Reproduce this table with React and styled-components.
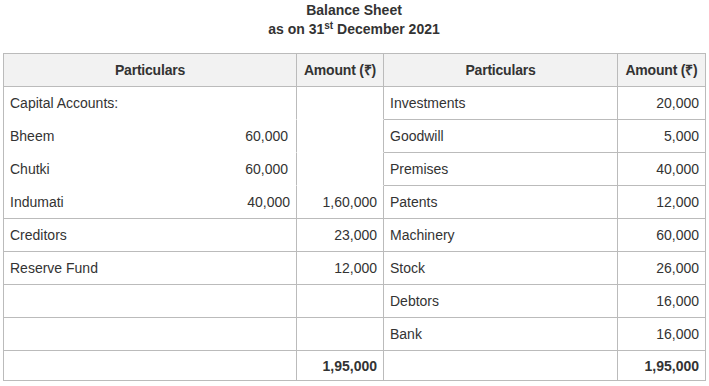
import styled, { createGlobalStyle } from 'styled-components';

const GlobalStyle = createGlobalStyle`
  body {
    margin: 0;
    background: #fff;
    font-family: "Liberation Sans", Arial, sans-serif;
    color: #333;
  }
`;

const Page = styled.div`
  padding: 1px 4px 0 3px;
`;

const Title = styled.div`
  text-align: center;
  font-weight: bold;
  font-size: 14px;
  line-height: 19px;
  margin-bottom: 14px;
`;

const Sup = styled.sup`
  font-size: 10px;
  line-height: 0;
  vertical-align: 5px;
`;

const Table = styled.table`
  width: 702px;
  border-collapse: separate;
  border-spacing: 0;
  border-top: 1px solid #bbb;
  border-left: 1px solid #bbb;
  font-size: 14px;
  table-layout: fixed;
`;

const Head = styled.th`
  background: #f2f2f2;
  font-weight: bold;
  text-align: center;
  padding: 6px 2px;
  line-height: 20px;
  white-space: nowrap;
  letter-spacing: -0.2px;
  border-right: 1px solid #bbb;
  border-bottom: 1px solid #bbb;
`;

const Cell = styled.td`
  padding: ${(p) => (p.$tight ? '5px 6px 4px' : '6px')};
  line-height: 20px;
  text-align: ${(p) => (p.$num ? 'right' : 'left')};
  font-weight: ${(p) => (p.$bold ? 'bold' : 'normal')};
  border-right: 1px solid #bbb;
  border-bottom: ${(p) => (p.$open ? '1px solid transparent' : '1px solid #bbb')};
  white-space: nowrap;
`;

const Split = styled.div`
  display: flex;
  justify-content: space-between;
  padding-right: ${(p) => p.$pad || 0}px;
`;

const capital = [
  { name: 'Capital Accounts:', amt: '', total: '', pad: 0 },
  { name: 'Bheem', amt: '60,000', total: '', pad: 2 },
  { name: 'Chutki', amt: '60,000', total: '', pad: 2 },
  { name: 'Indumati', amt: '40,000', total: '1,60,000', pad: 0 },
];

const liabilities = [
  ['Creditors', '23,000'],
  ['Reserve Fund', '12,000'],
  ['', ''],
  ['', ''],
];

const assets = [
  ['Investments', '20,000'],
  ['Goodwill', '5,000'],
  ['Premises', '40,000'],
  ['Patents', '12,000'],
  ['Machinery', '60,000'],
  ['Stock', '26,000'],
  ['Debtors', '16,000'],
  ['Bank', '16,000'],
];

function App() {
  return (
    <Page>
      <GlobalStyle />
      <Title>
        Balance Sheet
        <br />
        as on 31<Sup>st</Sup> December 2021
      </Title>
      <Table>
        <colgroup>
          <col style={{ width: 293 }} />
          <col style={{ width: 87 }} />
          <col style={{ width: 234 }} />
          <col style={{ width: 88 }} />
        </colgroup>
        <thead>
          <tr>
            <Head>Particulars</Head>
            <Head>Amount (₹)</Head>
            <Head>Particulars</Head>
            <Head>Amount (₹)</Head>
          </tr>
        </thead>
        <tbody>
          {assets.map(([asset, value], i) => {
            const cap = capital[i];
            const liab = liabilities[i - 4];
            return (
              <tr key={asset}>
                {cap ? (
                  <>
                    <Cell $open={i < 3}>
                      <Split $pad={cap.pad}>
                        <span>{cap.name}</span>
                        <span>{cap.amt}</span>
                      </Split>
                    </Cell>
                    <Cell $num $open={i < 3}>{cap.total}</Cell>
                  </>
                ) : (
                  <>
                    <Cell>{liab[0]}</Cell>
                    <Cell $num>{liab[1]}</Cell>
                  </>
                )}
                <Cell>{asset}</Cell>
                <Cell $num>{value}</Cell>
              </tr>
            );
          })}
          <tr>
            <Cell $tight />
            <Cell $tight $num $bold>1,95,000</Cell>
            <Cell $tight />
            <Cell $tight $num $bold>1,95,000</Cell>
          </tr>
        </tbody>
      </Table>
    </Page>
  );
}

export default App;
